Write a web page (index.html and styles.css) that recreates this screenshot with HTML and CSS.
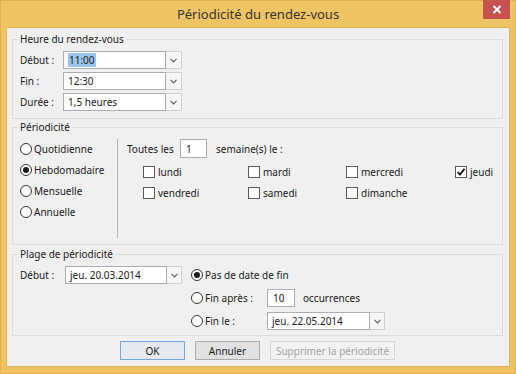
FILE: index.html
```html
<!DOCTYPE html>
<html>
<head lang="fr">
    <meta charset="UTF-8">
    <title>Périodicité du rendez-vous</title>
    <link rel="stylesheet" href="styles.css">
</head>
<body>
<div class="window">
    <div class="titlebar">
        <span></span>
        <span class="title">Périodicité du rendez-vous</span>
        <span class="close"><svg width="10" height="9" viewBox="0 0 10 9"><path d="M1.5 1 L8.5 8 M8.5 1 L1.5 8" stroke="#fff" stroke-width="2"/></svg></span>
    </div>
    <div class="client">
        <!-- heure -->
        <fieldset class="group">
            <legend>Heure du rendez-vous</legend>
            <div class="time-grid">
                <label>Début :</label>
                <div class="combo"><span class="combo-text"><span class="sel">11:00</span></span><span class="combo-btn"><svg width="7" height="5" viewBox="0 0 7 5"><path d="M0.5 0.8 L3.5 3.8 L6.5 0.8" fill="none" stroke="#606060" stroke-width="1.2"/></svg></span></div>
                <label>Fin :</label>
                <div class="combo"><span class="combo-text">12:30</span><span class="combo-btn"><svg width="7" height="5" viewBox="0 0 7 5"><path d="M0.5 0.8 L3.5 3.8 L6.5 0.8" fill="none" stroke="#606060" stroke-width="1.2"/></svg></span></div>
                <label>Durée :</label>
                <div class="combo"><span class="combo-text">1,5 heures</span><span class="combo-btn"><svg width="7" height="5" viewBox="0 0 7 5"><path d="M0.5 0.8 L3.5 3.8 L6.5 0.8" fill="none" stroke="#606060" stroke-width="1.2"/></svg></span></div>
            </div>
        </fieldset>

        <!-- periodicite -->
        <fieldset class="group g2">
            <legend>Périodicité</legend>
            <div class="recur">
                <div class="kinds">
                    <div class="opt"><span class="radio"></span>Quotidienne</div>
                    <div class="opt"><span class="radio on"></span>Hebdomadaire</div>
                    <div class="opt"><span class="radio"></span>Mensuelle</div>
                    <div class="opt"><span class="radio"></span>Annuelle</div>
                </div>
                <div class="weekly">
                    <div class="every">
                        <span class="every-label">Toutes les</span>
                        <span class="field small">1</span>
                        <span class="after">semaine(s) le :</span>
                    </div>
                    <div class="days">
                        <div class="opt"><span class="check"></span>lundi</div>
                        <div class="opt"><span class="check"></span>mardi</div>
                        <div class="opt"><span class="check"></span>mercredi</div>
                        <div class="opt"><span class="check"><svg width="10" height="10" viewBox="0 0 10 10"><path d="M1.6 5 L4 7.6 L8.6 1.8" fill="none" stroke="#111" stroke-width="1.8"/></svg></span>jeudi</div>
                        <div class="opt"><span class="check"></span>vendredi</div>
                        <div class="opt"><span class="check"></span>samedi</div>
                        <div class="opt"><span class="check"></span>dimanche</div>
                    </div>
                </div>
            </div>
        </fieldset>

        <!-- plage -->
        <fieldset class="group g3">
            <legend>Plage de périodicité</legend>
            <div class="range">
                <div class="start">
                    <label>Début :</label>
                    <div class="combo"><span class="combo-text">jeu. 20.03.2014</span><span class="combo-btn"><svg width="7" height="5" viewBox="0 0 7 5"><path d="M0.5 0.8 L3.5 3.8 L6.5 0.8" fill="none" stroke="#606060" stroke-width="1.2"/></svg></span></div>
                </div>
                <div class="ends">
                    <div class="opt wide"><span class="radio on"></span>Pas de date de fin</div>
                    <div class="opt"><span class="radio"></span>Fin après :</div>
                    <div class="inline"><span class="field count">10</span><span class="after">occurrences</span></div>
                    <div class="opt"><span class="radio"></span>Fin le :</div>
                    <div class="combo"><span class="combo-text">jeu. 22.05.2014</span><span class="combo-btn"><svg width="7" height="5" viewBox="0 0 7 5"><path d="M0.5 0.8 L3.5 3.8 L6.5 0.8" fill="none" stroke="#606060" stroke-width="1.2"/></svg></span></div>
                </div>
            </div>
        </fieldset>

        <div class="buttons">
            <button class="btn default">OK</button>
            <button class="btn">Annuler</button>
            <button class="btn wide disabled">Supprimer la périodicité</button>
        </div>
    </div>
</div>
</body>
</html>
```

FILE: styles.css
```css
* {
    margin: 0;
    padding: 0;
    box-sizing: border-box;
}
body {
    background: #F0C462;
    font-family: "Noto Sans", "Open Sans", sans-serif;
    font-size: 10px;
    color: #1a1a1a;
}
.window {
    width: 516px;
    height: 374px;
    background: #F0C462;
    box-shadow: inset 0 0 0 1px #E2B04E;
}

/* titre */
.titlebar {
    height: 28px;
    display: grid;
    grid-template-columns: 1fr auto 1fr;
}
.title {
    font-size: 13px;
    line-height: 28px;
    color: #333;
}
.close {
    justify-self: end;
    width: 27px;
    height: 19px;
    margin-right: 6px;
    background: #C75050;
    display: flex;
    align-items: center;
    justify-content: center;
}

.client {
    margin: 0 7px;
    height: 338px;
    padding: 4px 6px 0 5px;
    background: #F0F0F0;
    box-shadow: 0 0 0 1px #DDB45A;
}

/* group box */
.group {
    border: 1px solid #DCDCDC;
    min-width: 0;
}
.group legend {
    margin-left: 5px;
    padding: 0 2px;
    line-height: 14px;
}
.g2 {
    margin-top: 1px;
}
.g3 {
    margin-top: 2px;
}

.opt {
    display: flex;
    align-items: center;
    white-space: nowrap;
}

/* champs */
.combo {
    display: flex;
    height: 18px;
}
.combo-text {
    width: 103px;
    border: 1px solid #ABADB3;
    background: #fff;
    padding-left: 4px;
    display: flex;
    align-items: center;
    white-space: nowrap;
}
.combo-btn {
    width: 16px;
    border: 1px solid #CFCFCF;
    border-left: none;
    background: #F6F6F6;
    display: flex;
    align-items: center;
    justify-content: center;
}
.sel {
    background: #9DC6EE;
    padding: 0 1px;
}
.field {
    height: 19px;
    border: 1px solid #ABADB3;
    background: #fff;
    padding-left: 5px;
    display: flex;
    align-items: center;
}
.radio {
    width: 12px;
    height: 12px;
    margin-right: 2px;
    border: 1px solid #333;
    border-radius: 50%;
    background: #fff;
    display: flex;
    align-items: center;
    justify-content: center;
}
.radio.on::after {
    content: "";
    width: 6px;
    height: 6px;
    border-radius: 50%;
    background: #1a1a1a;
}
.check {
    width: 12px;
    height: 12px;
    margin-right: 3px;
    border: 1px solid #5A5A5A;
    background: #fff;
    display: flex;
    align-items: center;
    justify-content: center;
}

/* heure */
.time-grid {
    display: grid;
    grid-template-columns: 43px auto;
    grid-auto-rows: 18px;
    row-gap: 3px;
    align-items: center;
    padding: 5px 0 7px 7px;
}

/* periodicite */
.recur {
    display: flex;
    height: 110px;
    padding: 4px 0 6px 7px;
}
.kinds {
    width: 97px;
    display: grid;
    grid-auto-rows: 21px;
    align-content: start;
}
.weekly {
    margin-top: 1px;
    height: 99px;
    border-left: 1px solid #B4B4B4;
    padding-left: 9px;
}
.every {
    display: flex;
    align-items: center;
}
.every-label {
    width: 53px;
}
.field.small {
    width: 27px;
}
.after {
    margin-left: 9px;
}
.days {
    margin-top: 3px;
    padding-left: 16px;
    display: grid;
    grid-template-columns: 105px 98px 109px auto;
    grid-auto-rows: 21px;
}

/* plage */
.range {
    display: flex;
    padding: 5px 0 5px 7px;
}
.start {
    display: flex;
    align-items: center;
    height: 18px;
}
.start label {
    width: 45px;
}
.start .combo-text {
    width: 102px;
}
.start .combo-btn {
    width: 15px;
}
.ends {
    margin-left: 9px;
    display: grid;
    grid-template-columns: 76px auto;
    grid-auto-rows: 18px;
    row-gap: 5px;
    align-items: center;
}
.ends .wide {
    grid-column: 1 / 3;
}
.ends .combo-btn {
    width: 15px;
}
.inline {
    display: flex;
    align-items: center;
}
.field.count {
    width: 28px;
    height: 18px;
}
.inline .after {
    margin-left: 8px;
}

/* boutons */
.buttons {
    margin-top: 5px;
    display: flex;
    justify-content: center;
    gap: 10px;
}
.btn {
    width: 65px;
    height: 19px;
    border: 1px solid #ADADAD;
    background: #E1E1E1;
    font: inherit;
    color: #1a1a1a;
}
.btn.default {
    border-color: #6FAAE4;
    background: #E6EAEE;
}
.btn.wide {
    width: 125px;
}
.btn.disabled {
    border-color: #D6D6D6;
    background: #F2F2F2;
    color: #A3A3A3;
}
```
